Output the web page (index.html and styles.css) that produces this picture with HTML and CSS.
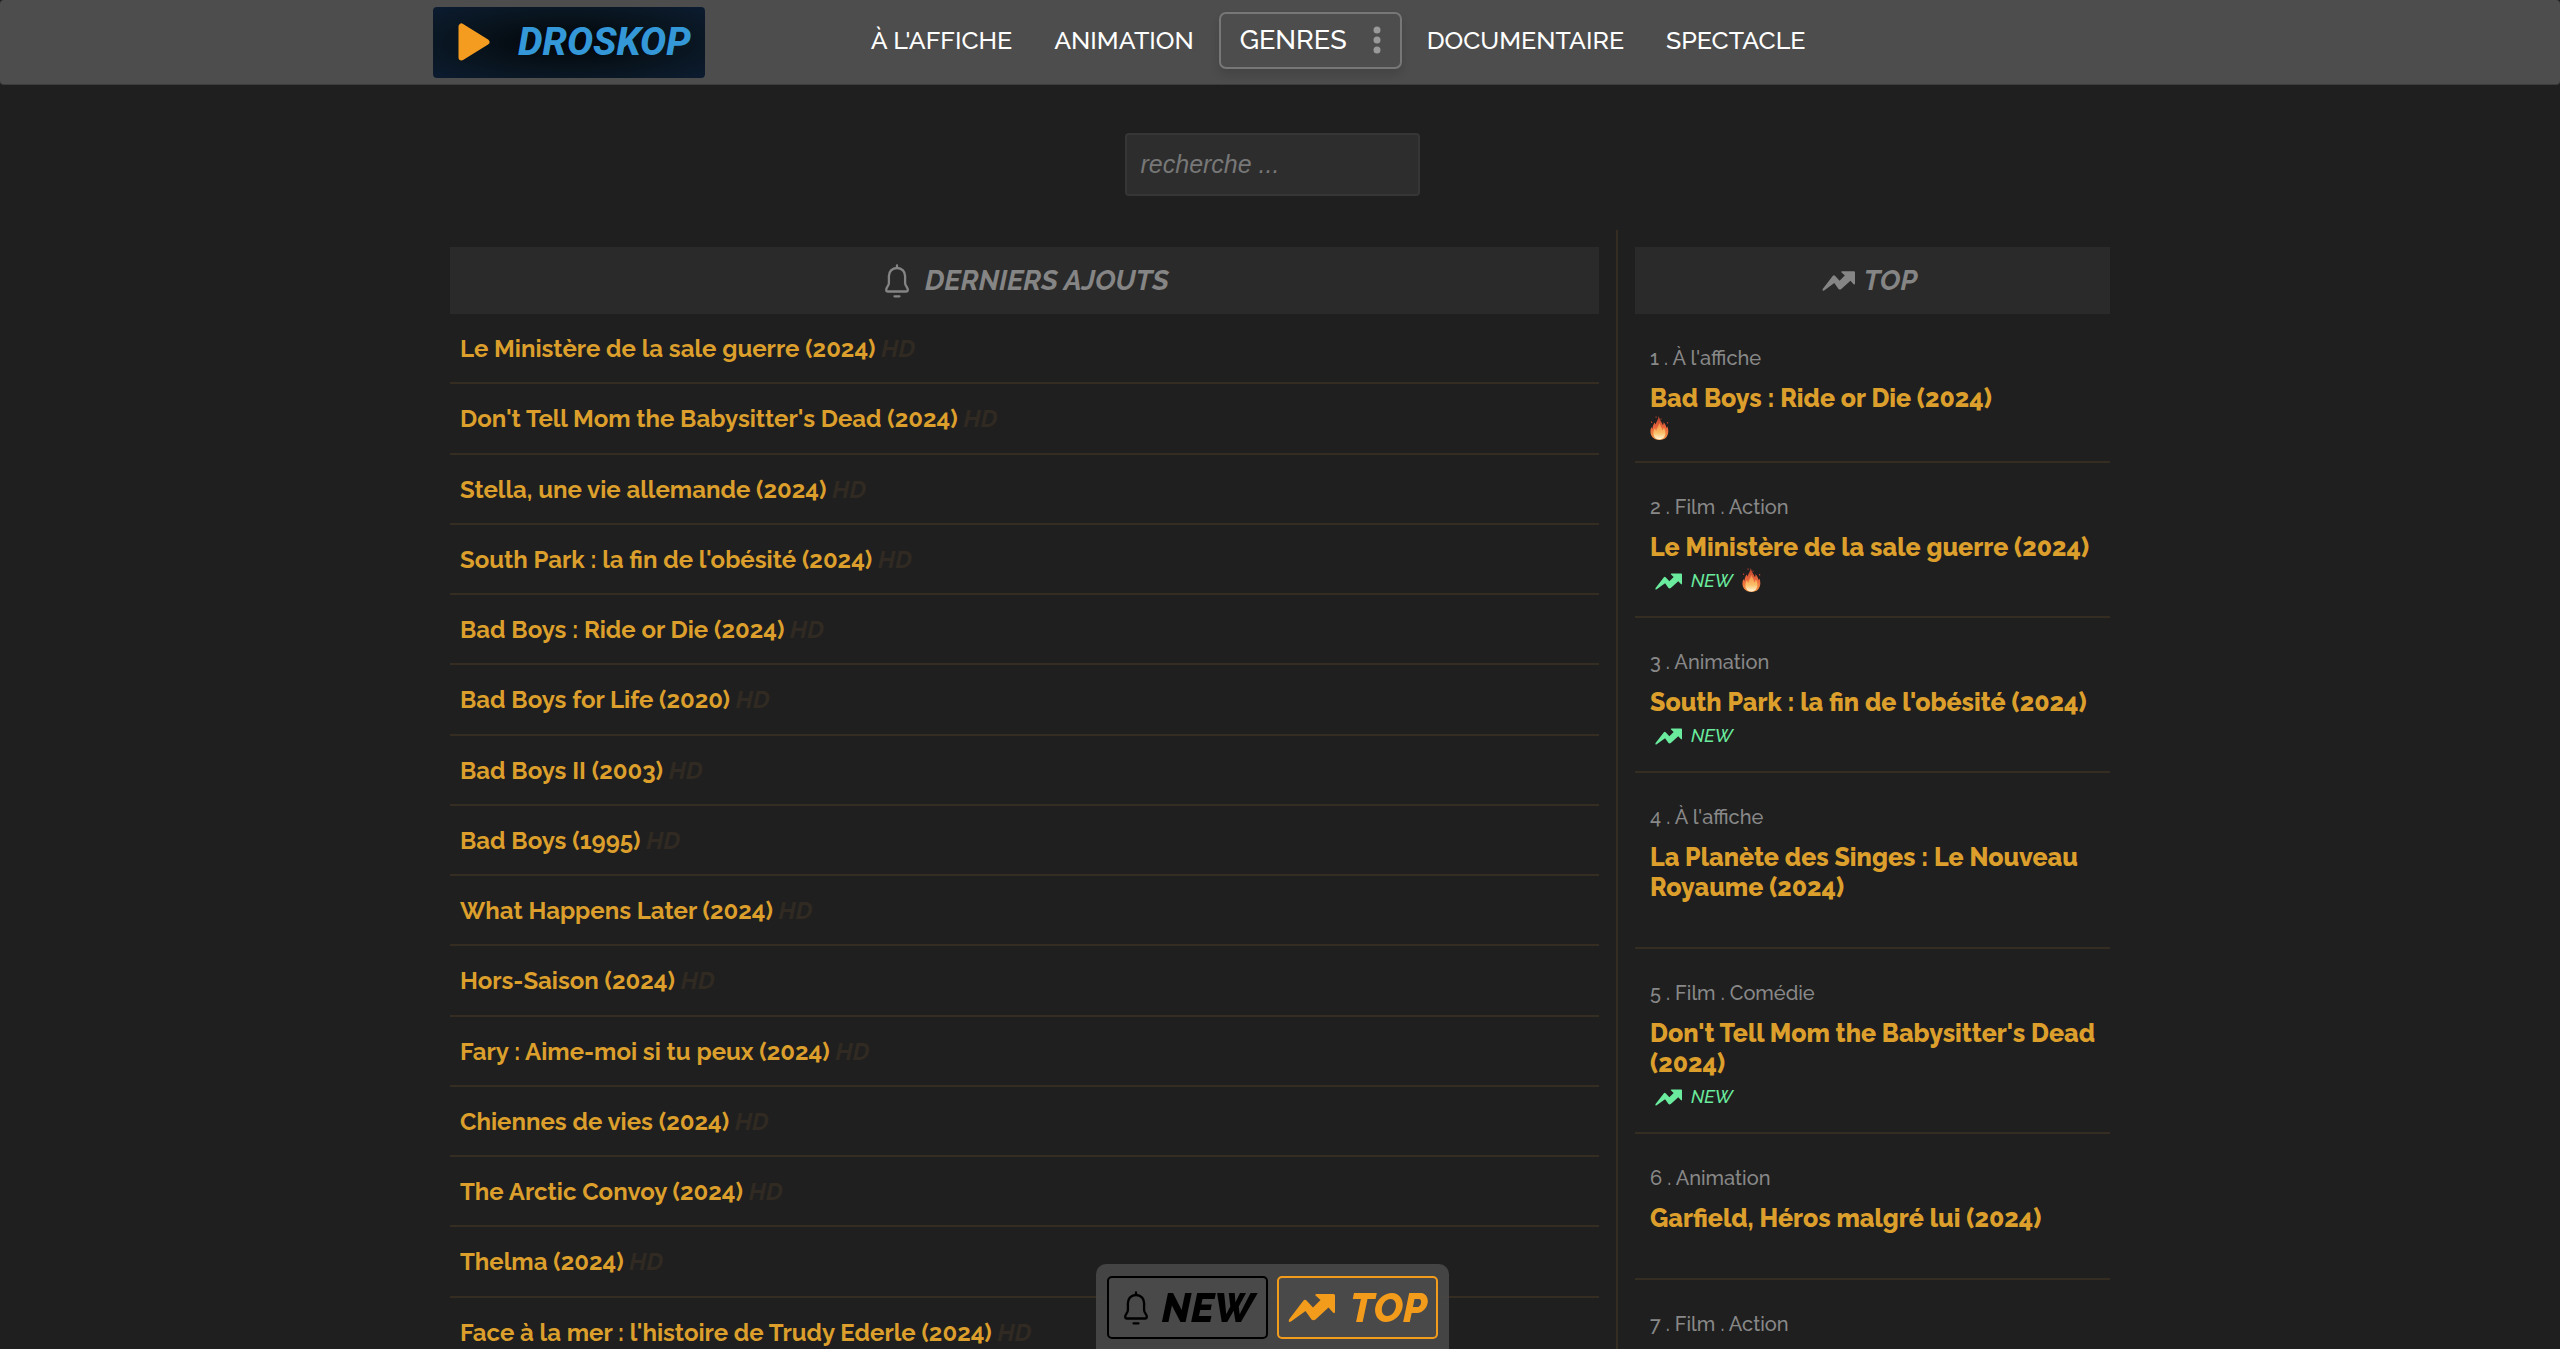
FILE: index.html
```html
<!DOCTYPE html>
<html lang="fr">
<head>
<meta charset="utf-8">
<title>Droskop</title>
<link rel="stylesheet" href="styles.css">
</head>
<body>
<svg class="sprite" aria-hidden="true">
  <defs>
    <linearGradient id="flame-outer" x1="0" y1="0" x2="0" y2="1">
      <stop offset="0" stop-color="#b5402c"/>
      <stop offset="0.5" stop-color="#ec683c"/>
      <stop offset="1" stop-color="#f59a45"/>
    </linearGradient>
    <linearGradient id="flame-inner" x1="0" y1="0" x2="0" y2="1">
      <stop offset="0" stop-color="#f28a44"/>
      <stop offset="0.6" stop-color="#fbc067"/>
      <stop offset="1" stop-color="#fff6dc"/>
    </linearGradient>
  </defs>
  <symbol id="trend" viewBox="0 0 47 28">
    <path d="M1 25.500 15.500 6.500Q17 5 18.500 6.500L25 13.500 32.500 6 27.500 1.500Q27 0 28.500 0H45.500Q47 0 47 1.500V18Q46.500 20 45 18.500L40.500 13.500 27.500 25.500Q25.500 27 23.500 25.500L17.500 17 3 27.500Q0 29 1 25.500Z" fill="currentColor"/>
  </symbol>
  <symbol id="bell" viewBox="0 0 24 34">
    <path d="M12 4C7 4 3.900 7.600 3.900 12V19C3.900 22 1.200 23.300 1.200 25.800 1.200 27 2 27.500 3 27.500H21C22 27.500 22.800 27 22.800 25.800 22.800 23.300 20.100 22 20.100 19V12C20.100 7.600 17 4 12 4ZM12 4V1.500M9.500 32.300H14.500" fill="none" stroke="currentColor" stroke-width="2.300" stroke-linecap="round" stroke-linejoin="round"/>
  </symbol>
  <symbol id="flame" viewBox="0 0 19 25">
    <path d="M8.800 1C9.500 5 12 7 12.800 10 13.600 9.300 13.600 8 13.400 7 15.500 9 16 11 16.600 13L17.400 11.500C18.800 15 18.800 19 16.500 22 14.800 24.300 12 25 9.500 25 6.500 25 4 24 2.300 22 0 19 0 15.500 1.300 12L2.400 14C2.600 11 3.600 9 4.600 7.500L5.600 9.500C6 6.500 8.300 5 8.800 1Z" fill="url(#flame-outer)"/>
    <path d="M9.300 8C10.500 11 12 12.500 12.400 15.500L14 12.500C15.600 15.500 16 18.500 14.600 21.300 13.500 23.500 11.500 24.600 9.400 24.600 7 24.600 5 23.500 4 21.300 2.800 18.500 3.500 15.500 4.800 13L6.200 16C6.400 13 8.600 11.500 9.300 8Z" fill="url(#flame-inner)"/>
    <path d="M5.500 1.500h1.200v1.300H5.500zM10.500 3.500h1v1.300h-1zM1 6.500h1.200V8H1zM17 7h1.200v1.500H17z" fill="#b5402c"/>
  </symbol>
</svg>

<header class="topbar">
  <div class="topbar-inner">
    <a class="logo" href="#">
      <svg class="logo-play" viewBox="0 0 32 38" aria-hidden="true"><path d="M3.500 3.500V34.500L28.500 19Z" fill="#f39c1f" stroke="#f39c1f" stroke-width="6" stroke-linejoin="round"/></svg>
      <span>DROSKOP</span>
    </a>
    <nav class="menu">
      <a href="#">À L'AFFICHE</a>
      <a href="#">ANIMATION</a>
      <button class="menu-genres" type="button">GENRES
        <svg class="dots" viewBox="0 0 8 28" aria-hidden="true"><circle cx="4" cy="4" r="3.500"/><circle cx="4" cy="14" r="3.500"/><circle cx="4" cy="24" r="3.500"/></svg>
      </button>
      <a href="#">DOCUMENTAIRE</a>
      <a href="#">SPECTACLE</a>
    </nav>
  </div>
</header>

<form class="search" role="search">
  <input type="search" placeholder="recherche ..." aria-label="recherche">
</form>

<main class="columns">
  <section class="latest">
    <h2 class="heading"><svg class="heading-bell" aria-hidden="true"><use href="#bell"/></svg>DERNIERS AJOUTS</h2>
    <ul class="latest-list">
      <li><a href="#">Le Ministère de la sale guerre (2024)</a> <i>HD</i></li>
      <li><a href="#">Don't Tell Mom the Babysitter's Dead (2024)</a> <i>HD</i></li>
      <li><a href="#">Stella, une vie allemande (2024)</a> <i>HD</i></li>
      <li><a href="#">South Park : la fin de l'obésité (2024)</a> <i>HD</i></li>
      <li><a href="#">Bad Boys : Ride or Die (2024)</a> <i>HD</i></li>
      <li><a href="#">Bad Boys for Life (2020)</a> <i>HD</i></li>
      <li><a href="#">Bad Boys II (2003)</a> <i>HD</i></li>
      <li><a href="#">Bad Boys (1995)</a> <i>HD</i></li>
      <li><a href="#">What Happens Later (2024)</a> <i>HD</i></li>
      <li><a href="#">Hors-Saison (2024)</a> <i>HD</i></li>
      <li><a href="#">Fary : Aime-moi si tu peux (2024)</a> <i>HD</i></li>
      <li><a href="#">Chiennes de vies (2024)</a> <i>HD</i></li>
      <li><a href="#">The Arctic Convoy (2024)</a> <i>HD</i></li>
      <li><a href="#">Thelma (2024)</a> <i>HD</i></li>
      <li><a href="#">Face à la mer : l'histoire de Trudy Ederle (2024)</a> <i>HD</i></li>
    </ul>
  </section>

  <aside class="top">
    <h2 class="heading"><svg class="heading-trend" aria-hidden="true"><use href="#trend"/></svg>TOP</h2>
    <ul class="top-list">
      <li>
        <p class="meta">1 . À l'affiche</p>
        <a href="#">Bad Boys : Ride or Die (2024)</a>
        <div class="badges"><svg class="flame" role="img" aria-label="Populaire"><use href="#flame"/></svg></div>
      </li>
      <li>
        <p class="meta">2 . Film . Action</p>
        <a href="#">Le Ministère de la sale guerre (2024)</a>
        <div class="badges"><span class="new"><svg aria-hidden="true"><use href="#trend"/></svg>NEW</span><svg class="flame" role="img" aria-label="Populaire"><use href="#flame"/></svg></div>
      </li>
      <li>
        <p class="meta">3 . Animation</p>
        <a href="#">South Park : la fin de l'obésité (2024)</a>
        <div class="badges"><span class="new"><svg aria-hidden="true"><use href="#trend"/></svg>NEW</span></div>
      </li>
      <li>
        <p class="meta">4 . À l'affiche</p>
        <a href="#">La Planète des Singes : Le Nouveau Royaume (2024)</a>
        <div class="badges"></div>
      </li>
      <li>
        <p class="meta">5 . Film . Comédie</p>
        <a href="#">Don't Tell Mom the Babysitter's Dead (2024)</a>
        <div class="badges"><span class="new"><svg aria-hidden="true"><use href="#trend"/></svg>NEW</span></div>
      </li>
      <li>
        <p class="meta">6 . Animation</p>
        <a href="#">Garfield, Héros malgré lui (2024)</a>
        <div class="badges"></div>
      </li>
      <li>
        <p class="meta">7 . Film . Action</p>
      </li>
    </ul>
  </aside>
</main>

<div class="dock">
  <div class="dock-panel">
    <button class="dock-new" type="button"><svg aria-hidden="true"><use href="#bell"/></svg>NEW</button>
    <button class="dock-top" type="button"><svg aria-hidden="true"><use href="#trend"/></svg>TOP</button>
  </div>
</div>
</body>
</html>
```

FILE: styles.css
```css
* { box-sizing: border-box; }

html, body { height: 100%; }

body {
  margin: 0;
  overflow: hidden;
  background: #1f1f1f;
  color: #888;
  font-family: Raleway, Lato, sans-serif;
}

a { color: inherit; text-decoration: none; }
button { font: inherit; cursor: pointer; }
ul { margin: 0; padding: 0; list-style: none; }
svg { flex: none; }

.sprite { position: absolute; width: 0; height: 0; }

/* Top bar */
.topbar {
  border-bottom: 1px solid #3c3c3c;
  border-radius: 4px;
  background: #4d4d4d;
}

.topbar-inner {
  display: flex;
  align-items: center;
  max-width: 1694px;
  height: 84px;
  margin: 0 auto;
}

.logo {
  display: flex;
  align-items: center;
  gap: 28px;
  height: 71px;
  padding: 0 14px 0 25px;
  border-radius: 4px;
  background: radial-gradient(ellipse at center, #020408 0%, #08131c 50%, #0c1c30 100%);
  color: #3498d8;
  font: italic 800 39px Roboto, sans-serif;
}

.logo-play { width: 32px; height: 38px; }

.menu {
  display: flex;
  align-items: center;
  margin-left: 145px;
  padding-bottom: 4px;
  color: #fff;
  font-size: 25px;
  font-weight: 500;
  line-height: 32px;
}

.menu a { padding: 0 21px; }

.menu-genres {
  display: flex;
  align-items: center;
  gap: 26px;
  height: 57px;
  margin: 0 4px;
  padding: 0 19px;
  border: 2px solid #777;
  border-radius: 7px;
  background: transparent;
  box-shadow: 0 6px 10px rgba(0, 0, 0, 0.12);
  color: #fff;
  font-size: 27px;
}

.dots { width: 8px; height: 28px; fill: #999; }

/* Search */
.search {
  display: flex;
  justify-content: center;
  padding: 48px 16px 34px 0;
}

.search input {
  width: 295px;
  height: 63px;
  padding: 0 14px;
  border: 2px solid #363636;
  border-radius: 4px;
  background: #2d2d2d;
  color: #ccc;
  font: italic 25px "Liberation Sans", Arial, sans-serif;
  appearance: none;
}

.search input::placeholder { color: #777; }

/* Columns */
.columns {
  display: flex;
  max-width: 1694px;
  margin: 0 auto;
}

.latest { flex: 1; padding: 17px 17px 0; }

.top {
  flex: 0 0 511px;
  padding: 17px 17px 0;
  border-left: 2px solid #352d22;
}

.heading {
  display: flex;
  align-items: center;
  justify-content: center;
  height: 67px;
  margin: 0;
  background: #2a2a2a;
  color: #858585;
  font-size: 28px;
  font-style: italic;
  font-weight: 700;
}

.latest .heading { padding-left: 5px; }
.top .heading { padding-right: 6px; }
.heading-bell { width: 24px; height: 34px; margin-right: 16px; }
.heading-trend { width: 33px; height: 20px; margin-right: 9px; }

.latest-list {
  display: grid;
  grid-auto-rows: 1fr;
  min-height: 1054px;
}

.latest-list li {
  padding: 18px 10px 16px;
  border-bottom: 2px solid #352d22;
  color: #302a22;
  font-size: 24px;
  font-weight: 700;
  line-height: 34px;
}

.latest-list a, .top-list a { color: #dc9f2c; }

.top-list li {
  padding: 32px 8px 20px 15px;
  border-bottom: 2px solid #352d22;
}

.meta {
  margin: 0 0 13px;
  font-size: 20px;
  font-weight: 500;
  line-height: 24px;
}

.top-list a {
  display: block;
  font-size: 25px;
  font-weight: 800;
  line-height: 30px;
}

.badges {
  display: flex;
  align-items: center;
  min-height: 21px;
  margin-top: 4px;
}

.new {
  display: flex;
  align-items: center;
  gap: 9px;
  margin-right: 9px;
  padding-left: 5px;
  color: #6aeb9e;
  font-size: 18px;
  font-style: italic;
  font-weight: 500;
  line-height: 30px;
}

.new svg { width: 27px; height: 17px; }
.flame { width: 19px; height: 25px; margin: -2px 0 1px; }

/* Floating switch */
.dock {
  position: fixed;
  right: 15px;
  bottom: 0;
  left: 0;
  display: flex;
  justify-content: center;
}

.dock-panel {
  display: flex;
  gap: 9px;
  padding: 12px 11px 10px;
  border-radius: 10px 10px 0 0;
  background: rgba(72, 72, 72, 0.9);
}

.dock button {
  display: flex;
  align-items: center;
  height: 63px;
  border: 2px solid;
  border-radius: 5px;
  background: #494949;
  font-size: 40px;
  font-style: italic;
  font-weight: 800;
}

.dock .dock-new { gap: 14px; padding: 0 12px 0 15px; color: #000; }
.dock .dock-top { gap: 15px; padding: 0 9px; color: #f39c1c; }
.dock-new svg { width: 24px; height: 34px; }
.dock-top svg { width: 47px; height: 28px; }
```
